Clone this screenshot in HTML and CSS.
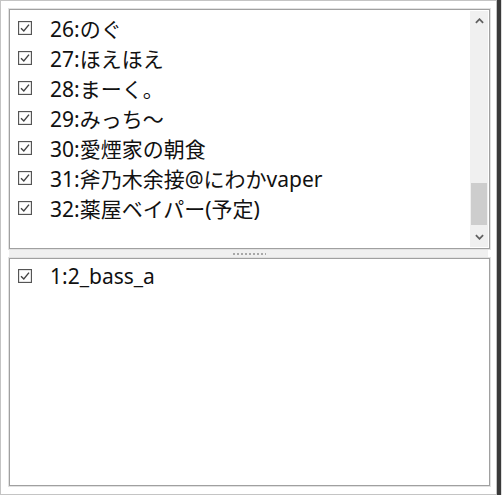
FILE: index.html
```html
<!DOCTYPE html>
<html lang="ja">
<head>
  <meta charset="UTF-8">
  <title>リスト</title>
  <link rel="stylesheet" href="styles.css">
</head>
<body>
  <div class="frame">
    <div class="panel panel-top">
      <ul class="check-list">
        <li><span class="box"><svg viewBox="0 0 14 14"><rect x="0.5" y="0.5" width="13" height="13"/><path d="M3 7.2 L5.8 10 L11 3.6"/></svg></span>26:のぐ</li>
        <li><span class="box"><svg viewBox="0 0 14 14"><rect x="0.5" y="0.5" width="13" height="13"/><path d="M3 7.2 L5.8 10 L11 3.6"/></svg></span>27:ほえほえ</li>
        <li><span class="box"><svg viewBox="0 0 14 14"><rect x="0.5" y="0.5" width="13" height="13"/><path d="M3 7.2 L5.8 10 L11 3.6"/></svg></span>28:まーく。</li>
        <li><span class="box"><svg viewBox="0 0 14 14"><rect x="0.5" y="0.5" width="13" height="13"/><path d="M3 7.2 L5.8 10 L11 3.6"/></svg></span>29:みっち～</li>
        <li><span class="box"><svg viewBox="0 0 14 14"><rect x="0.5" y="0.5" width="13" height="13"/><path d="M3 7.2 L5.8 10 L11 3.6"/></svg></span>30:愛煙家の朝食</li>
        <li><span class="box"><svg viewBox="0 0 14 14"><rect x="0.5" y="0.5" width="13" height="13"/><path d="M3 7.2 L5.8 10 L11 3.6"/></svg></span>31:斧乃木余接@にわかvaper</li>
        <li><span class="box"><svg viewBox="0 0 14 14"><rect x="0.5" y="0.5" width="13" height="13"/><path d="M3 7.2 L5.8 10 L11 3.6"/></svg></span>32:薬屋ベイパー(予定)</li>
      </ul>
      <div class="scrollbar">
        <div class="arrow"><svg viewBox="0 0 10 6"><path d="M1 5 L5 1 L9 5"/></svg></div>
        <div class="track">
          <div class="thumb"></div>
        </div>
        <div class="arrow"><svg viewBox="0 0 10 6"><path d="M1 1 L5 5 L9 1"/></svg></div>
      </div>
    </div>
    <div class="splitter"><span class="grip"></span></div>
    <div class="panel panel-bottom">
      <ul class="check-list">
        <li><span class="box"><svg viewBox="0 0 14 14"><rect x="0.5" y="0.5" width="13" height="13"/><path d="M3 7.2 L5.8 10 L11 3.6"/></svg></span>1:2_bass_a</li>
      </ul>
    </div>
  </div>
</body>
</html>
```

FILE: styles.css
```css
* {
  margin: 0;
  padding: 0;
  box-sizing: border-box;
}

body {
  background-color: #fff;
  font-family: "Noto Sans", "Noto Sans CJK JP", sans-serif;
}

.frame {
  width: 497px;
  height: 495px;
  padding: 8px;
  border: 1px solid #c4c4c4;
  box-shadow: 2px 2px 1px 2px #3a3a3a;
  display: flex;
  flex-direction: column;
}

.panel {
  width: 481px;
  border: 1px solid #a0a0a0;
  box-shadow: 0 0 0 1px #e2e2e2;
  background-color: #fff;
  display: flex;
}

.panel-top {
  height: 240px;
  padding: 1px;
}

.panel-bottom {
  flex: 1;
  padding: 1px;
}

.check-list {
  list-style: none;
  flex: 1;
  padding: 2px 0 0 7px;
}

.panel-bottom .check-list {
  padding-top: 1px;
}

.check-list li {
  height: 30px;
  display: flex;
  align-items: center;
  font-size: 21px;
  color: #111;
  white-space: nowrap;
}

.box {
  width: 14px;
  height: 14px;
  margin-right: 18px;
  display: flex;
}

.box svg {
  width: 14px;
  height: 14px;
  fill: #fff;
  stroke: #555;
  stroke-width: 1.3;
}

.box path {
  fill: none;
  stroke: #444;
  stroke-width: 1.4;
}

/* スクロールバー */
.scrollbar {
  width: 18px;
  background-color: #f0f0f0;
  display: flex;
  flex-direction: column;
}

.arrow {
  height: 20px;
  display: flex;
  align-items: center;
  justify-content: center;
}

.arrow svg {
  width: 9px;
  height: 6px;
  fill: none;
  stroke: #606060;
  stroke-width: 2;
}

.track {
  flex: 1;
  display: flex;
  flex-direction: column;
  justify-content: flex-end;
  padding: 0 1px 2px;
}

.thumb {
  height: 42px;
  background-color: #cdcdcd;
}

/* 分割バー */
.splitter {
  height: 7px;
  margin: 1px 0;
  background-color: #f0f0f0;
  display: flex;
  align-items: center;
  justify-content: center;
}

.grip {
  width: 34px;
  height: 2px;
  background-image: radial-gradient(circle, #a8a8a8 0.8px, transparent 1px);
  background-size: 4px 2px;
}
```
